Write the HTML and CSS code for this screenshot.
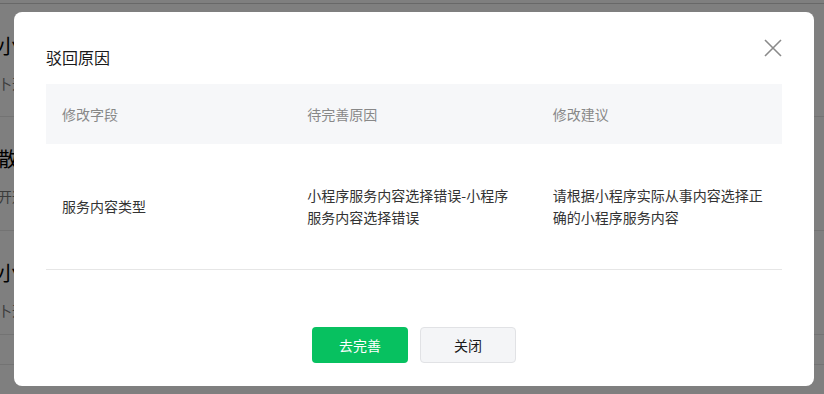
FILE: index.html
```html
<!DOCTYPE html>
<html lang="zh-CN">
<head>
<meta charset="utf-8">
<title>驳回原因</title>
<link rel="stylesheet" href="styles.css">
</head>
<body>
<div class="page">
  <div class="topbar"></div>
  <div class="row">
    <div class="row-title">小程</div>
    <div class="row-sub">卜开</div>
  </div>
  <div class="row">
    <div class="row-title">散</div>
    <div class="row-sub">开通</div>
  </div>
  <div class="row row-short">
    <div class="row-title">小程</div>
    <div class="row-sub">卜开</div>
  </div>
  <div class="row row-tail"></div>
</div>
<div class="mask"></div>
<div class="dialog">
  <div class="dialog-head">
    <h2 class="dialog-title">驳回原因</h2>
    <button class="close" aria-label="关闭">
      <svg width="18" height="18" viewBox="0 0 18 18"><path d="M1 1 L17 17 M17 1 L1 17" stroke="#8a8a8a" stroke-width="1.6" fill="none"/></svg>
    </button>
  </div>
  <table class="reasons">
    <thead>
      <tr><th>修改字段</th><th>待完善原因</th><th>修改建议</th></tr>
    </thead>
    <tbody>
      <tr>
        <td>服务内容类型</td>
        <td>小程序服务内容选择错误-小程序服务内容选择错误</td>
        <td>请根据小程序实际从事内容选择正确的小程序服务内容</td>
      </tr>
    </tbody>
  </table>
  <div class="actions">
    <button class="btn btn-primary">去完善</button>
    <button class="btn btn-default">关闭</button>
  </div>
</div>
</body>
</html>
```
FILE: styles.css
```css
* { box-sizing: border-box; }
body {
  margin: 0;
  background: #fff;
  font-family: "Noto Sans CJK SC", "Noto Sans", sans-serif;
  overflow: hidden;
}
.page { width: 824px; }
.topbar { height: 4px; border-bottom: 1px solid #d0d0d0; }
.row {
  height: 113px;
  border-bottom: 1px solid #e6e6e6;
  padding-top: 29px;
}
.row + .row { height: 114px; }
.row.row-short { height: 104px; }
.row.row-tail { height: 28px; }
.row-title { font-size: 20px; line-height: 26px; color: #000; margin-left: -2px; }
.row-sub { font-size: 14px; line-height: 20px; color: #777; margin-top: 14px; margin-left: -2px; }
.mask {
  position: fixed;
  inset: 0;
  background: rgba(0, 0, 0, 0.5);
}
.dialog {
  position: fixed;
  left: 14px;
  top: 12px;
  width: 800px;
  height: 374px;
  background: #fff;
  border-radius: 8px;
  padding: 32px 32px 23px;
  display: flex;
  flex-direction: column;
}
.dialog-head {
  display: flex;
  justify-content: space-between;
  align-items: flex-start;
}
.dialog-title {
  margin: 0;
  font-size: 16px;
  line-height: 26px;
  font-weight: normal;
  color: #1a1a1a;
}
.close {
  width: 18px;
  height: 18px;
  padding: 0;
  margin-top: -5px;
  border: 0;
  background: none;
  display: block;
}
.close svg { display: block; }
.reasons {
  margin-top: 14px;
  width: 736px;
  table-layout: fixed;
  border-collapse: collapse;
  font-size: 14px;
}
.reasons th {
  height: 60px;
  padding: 0 16px;
  background: #f6f7f9;
  color: #888;
  font-weight: normal;
  text-align: left;
}
.reasons td {
  padding: 40px 16px 41px;
  line-height: 22px;
  color: #333;
  border-bottom: 1px solid #e6e6e6;
  vertical-align: middle;
}
.actions {
  margin-top: auto;
  display: flex;
  justify-content: center;
  gap: 12px;
}
.btn {
  width: 96px;
  height: 36px;
  border-radius: 4px;
  font-family: inherit;
  font-size: 14px;
  padding: 0;
}
.btn-primary { background: #07c160; color: #fff; border: 0; }
.btn-default { background: #f4f5f7; color: #1a1a1a; border: 1px solid #e1e2e5; }
```
